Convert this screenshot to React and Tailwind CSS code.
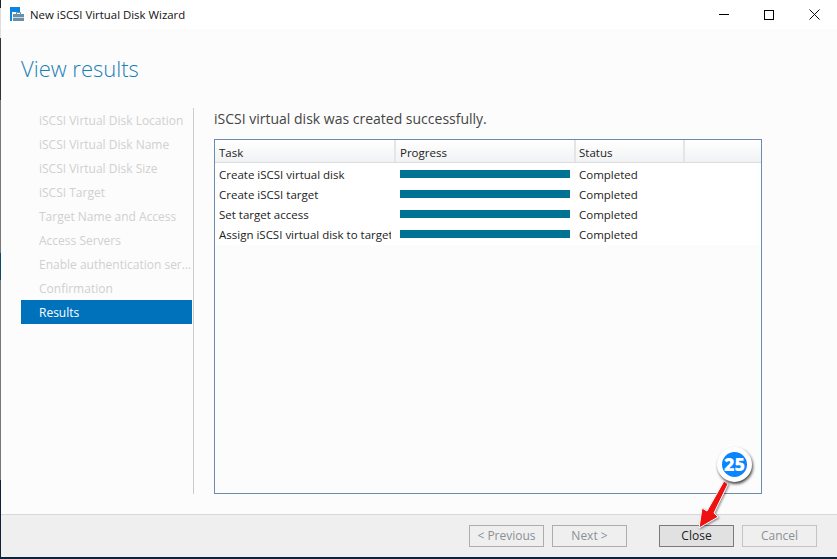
const font = { fontFamily: '"Open Sans"' };

const STEPS = [
  'iSCSI Virtual Disk Location',
  'iSCSI Virtual Disk Name',
  'iSCSI Virtual Disk Size',
  'iSCSI Target',
  'Target Name and Access',
  'Access Servers',
  'Enable authentication ser...',
  'Confirmation',
];

const TASKS = [
  'Create iSCSI virtual disk',
  'Create iSCSI target',
  'Set target access',
  'Assign iSCSI virtual disk to target',
];

const WizardIcon = () => (
  <svg width="15" height="16" viewBox="0 0 15 16" className="shrink-0">
    <rect x="0" y="0" width="10" height="5" fill="#0a84e0" />
    <rect x="0" y="5" width="2" height="9" fill="#0a84e0" />
    <path d="M6.5 7 V5.5 H10.5 V7" fill="none" stroke="#6b8fa8" strokeWidth="1" />
    <rect x="3" y="7" width="11" height="7" fill="#6b8fa8" />
    <rect x="3" y="10" width="11" height="1" fill="#cfdbe3" />
  </svg>
);

const Header = ({ label, width, className = '' }) => (
  <div className={`${width} h-full flex items-center pt-[4px] border-r-2 border-[#e3e5e8] text-[11.5px] text-[#222] ${className}`}>
    {label}
  </div>
);

const Button = ({ label, className }) => (
  <div className={`w-[75px] h-[22px] flex items-center justify-center border text-[12px] ${className}`}>
    {label}
  </div>
);

// numbered marker and arrow drawn over the Close button
const Callout = () => (
  <div className="absolute left-[698px] top-[446px] w-[56px] h-[84px]">
    <svg width="56" height="84" viewBox="0 0 56 84" className="absolute left-0 top-0 drop-shadow-[1px_1px_1px_rgba(0,0,0,0.45)]">
      <path d="M26 35 L30 38 L16 67 L20 71 L1 82 L4 62 L9 65 Z" fill="#ee1111" stroke="#ffffff" strokeWidth="1" />
    </svg>
    <div className="absolute left-[19px] top-[1px] w-[35px] h-[35px] rounded-full bg-[#0a84ff] border-[5px] border-white shadow-[1px_2px_3px_rgba(0,0,0,0.7)] flex items-center justify-center text-white font-extrabold text-[18px]">
      25
    </div>
  </div>
);

export default function App() {
  return (
    <div
      className="relative w-[837px] h-[559px] pl-px pb-[2px] overflow-hidden bg-[linear-gradient(to_bottom,#222_0,#222_8px,#ddd_8px,#ddd_38px,#333_38px,#333_100px,#777_100px,#777_253px,#0f4a6b_253px,#0f4a6b_280px,#777_280px,#777_480px,#0f2338_480px)]"
      style={font}
    >
      <div className="h-full flex flex-col bg-[#fcfcfc]">
        <div className="h-[29px] bg-white flex items-center pl-[9px] pr-[17px]">
          <WizardIcon />
          <span className="ml-[5px] text-[11.4px] text-[#111]">New iSCSI Virtual Disk Wizard</span>
          <div className="ml-auto flex items-center gap-[35px]">
            <div className="w-[10px] h-px bg-black" />
            <div className="w-[10px] h-[10px] border border-black" />
            <svg width="11" height="11" viewBox="0 0 11 11">
              <path d="M0.5 0.5 L10.5 10.5 M10.5 0.5 L0.5 10.5" stroke="#111" strokeWidth="1" />
            </svg>
          </div>
        </div>

        <div className="h-[79px] pl-[20px] pt-[21px] text-[22px] leading-[36px] text-[#1a7fb8] font-light">
          View results
        </div>

        <div className="flex h-[386px] pl-[20px]">
          <div className="w-[173px] border-r border-[#cccccc]">
            <div className="w-[171px]">
              {STEPS.map((s) => (
                <div key={s} className="h-[24px] flex items-center pl-[18px] pt-[2px] text-[12px] text-[#d0d0d0] whitespace-nowrap">{s}</div>
              ))}
              <div className="h-[24px] flex items-center pl-[18px] pt-[2px] text-[12px] text-white bg-[#0072bc]">Results</div>
            </div>
          </div>

          <div className="ml-[20px] w-[548px] flex flex-col">
            <div className="h-[31px] pt-px text-[14px] leading-[20px] text-[#444]">iSCSI virtual disk was created successfully.</div>
            <div className="h-[355px] border border-[#6c8bb0] bg-[#fcfcfc]">
              <div className="h-[23px] flex items-center border-b border-[#dcdde0] bg-gradient-to-b from-white to-[#f1f2f4]">
                <Header label="Task" width="w-[181px]" className="pl-[4px]" />
                <Header label="Progress" width="w-[180px]" className="pl-[4px]" />
                <Header label="Status" width="w-[109px]" className="pl-[3px]" />
              </div>
              <div className="pt-[1px] pb-[1px] bg-white">
                {TASKS.map((t) => (
                  <div key={t} className="h-[20px] flex items-center text-[11.5px] text-[#222]">
                    <div className="w-[176px] pl-[4px] pt-[1px] whitespace-nowrap overflow-hidden">{t}</div>
                    <div className="ml-[9px] w-[170px] h-[8px] bg-[#007294]" />
                    <div className="ml-[9px] pt-[1px]">Completed</div>
                  </div>
                ))}
              </div>
            </div>
          </div>
        </div>

        <div className="mt-[20px] flex-1 bg-[#efefef] border-t border-[#d8d8d8] flex items-center pl-[468px]">
          <Button label="< Previous" className="border-[#adadad] text-[#8a8f96]" />
          <Button label="Next >" className="ml-[8px] border-[#adadad] text-[#8a8f96]" />
          <Button label="Close" className="ml-[32px] bg-[#e1e1e1] border-[#7a7a7a] text-[#222]" />
          <Button label="Cancel" className="ml-[8px] border-[#c4c4c4] text-[#8a8f96]" />
        </div>
      </div>
      <Callout />
    </div>
  );
}
